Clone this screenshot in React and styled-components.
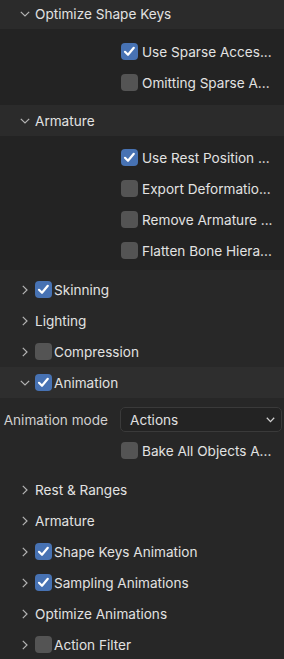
import React from "react"
import styled, { createGlobalStyle } from "styled-components"

const GlobalStyle = createGlobalStyle`
  html, body {
    margin: 0;
    padding: 0;
    background: #282828;
    overflow: hidden;
  }
  body {
    font-family: Inter, "Noto Sans", "Liberation Sans", sans-serif;
    font-size: 13.6px;
    color: #e2e2e2;
    -webkit-font-smoothing: antialiased;
  }
`

const Chevron = ({ open }) =>
  open ? (
    <ChevronBox>
      <svg width="10" height="6" viewBox="0 0 10 6">
        <path d="M0.8 0.8 L5 5 L9.2 0.8" fill="none" stroke="#b4b4b4" strokeWidth="1.2" />
      </svg>
    </ChevronBox>
  ) : (
    <ChevronBox>
      <svg width="6" height="10" viewBox="0 0 6 10">
        <path d="M0.8 0.8 L5 5 L0.8 9.2" fill="none" stroke="#b4b4b4" strokeWidth="1.2" />
      </svg>
    </ChevronBox>
  )

const Check = ({ checked }) => (
  <CheckBox $checked={checked}>
    {checked && (
      <svg width="17" height="17" viewBox="0 0 17 17">
        <path d="M4 8.8 L7 11.8 L12.8 4.8" fill="none" stroke="#ffffff" strokeWidth="2.2" strokeLinecap="round" strokeLinejoin="round" />
      </svg>
    )}
  </CheckBox>
)

const Header = ({ open, checked, children, bg }) => (
  <HeaderRow $bg={bg}>
    <Chevron open={open} />
    {checked !== undefined && <Check checked={checked} />}
    <HeaderText $gap={checked !== undefined}>{children}</HeaderText>
  </HeaderRow>
)

const Prop = ({ checked, children }) => (
  <PropRow>
    <span />
    <ValueCell>
      <Check checked={checked} />
      <PropText>{children}</PropText>
    </ValueCell>
  </PropRow>
)

const App = () => (
  <>
    <GlobalStyle />
    <Page>
      <Header open bg="#2b2b2b">Optimize Shape Keys</Header>
      <Body $bg="#232323" $pad="7px 0 7px">
        <Prop checked>Use Sparse Acces...</Prop>
        <Prop>Omitting Sparse A...</Prop>
      </Body>

      <Header open bg="#2b2b2b">Armature</Header>
      <Body $bg="#232323" $pad="6px 0 4px">
        <Prop checked>Use Rest Position ...</Prop>
        <Prop>Export Deformatio...</Prop>
        <Prop>Remove Armature ...</Prop>
        <Prop>Flatten Bone Hiera...</Prop>
      </Body>

      <Body $bg="#282828" $pad="4px 0 0">
        <Header checked>Skinning</Header>
        <Header>Lighting</Header>
        <Header checked={false}>Compression</Header>
      </Body>

      <Header open checked bg="#2e2e2e">Animation</Header>
      <Body $bg="#272727" $pad="6px 0 0">
        <PropRow>
          <PropLabel>Animation mode</PropLabel>
          <Select>
            <span>Actions</span>
            <svg width="9" height="6" viewBox="0 0 9 6">
              <path d="M0.8 0.8 L4.5 4.6 L8.2 0.8" fill="none" stroke="#d0d0d0" strokeWidth="1.3" />
            </svg>
          </Select>
        </PropRow>
        <Prop>Bake All Objects A...</Prop>
        <Spacer />
        <Header>Rest &amp; Ranges</Header>
        <Header>Armature</Header>
        <Header checked>Shape Keys Animation</Header>
        <Header checked>Sampling Animations</Header>
        <Header>Optimize Animations</Header>
        <Header checked={false}>Action Filter</Header>
      </Body>
    </Page>
  </>
)

export default App

const Page = styled.div`
  margin-top: -2px;
  display: flex;
  flex-direction: column;
`

const HeaderRow = styled.div`
  height: 31px;
  display: flex;
  align-items: center;
  padding-left: 20px;
  background: ${(p) => p.$bg || "transparent"};
`

const ChevronBox = styled.span`
  width: 10px;
  height: 10px;
  display: flex;
  align-items: center;
  justify-content: center;
  margin-right: 5px;
  flex: none;
`

const HeaderText = styled.span`
  margin-left: ${(p) => (p.$gap ? "2px" : "0")};
  white-space: nowrap;
`

const Body = styled.div`
  background: ${(p) => p.$bg};
  padding: ${(p) => p.$pad};
  display: flex;
  flex-direction: column;
`

const PropRow = styled.div`
  height: 31px;
  display: grid;
  grid-template-columns: 108px 1fr;
  column-gap: 12px;
  align-items: center;
  padding: 0 2px 0 0;
`

const PropLabel = styled.span`
  text-align: right;
  color: #d0d0d0;
  white-space: nowrap;
`

const ValueCell = styled.div`
  display: flex;
  align-items: center;
  padding-left: 1px;
`

const PropText = styled.span`
  margin-left: 4px;
  white-space: nowrap;
`

const CheckBox = styled.span`
  width: 17px;
  height: 17px;
  border-radius: 4px;
  flex: none;
  display: flex;
  background: ${(p) => (p.$checked ? "#4772b3" : "#545454")};
`

const Select = styled.div`
  height: 25px;
  box-sizing: border-box;
  border: 1px solid #3a3a3a;
  border-radius: 5px;
  background: #232323;
  display: flex;
  align-items: center;
  justify-content: space-between;
  padding: 0 6px 0 9px;
  color: #e0e0e0;
`

const Spacer = styled.div`
  height: 8px;
`
